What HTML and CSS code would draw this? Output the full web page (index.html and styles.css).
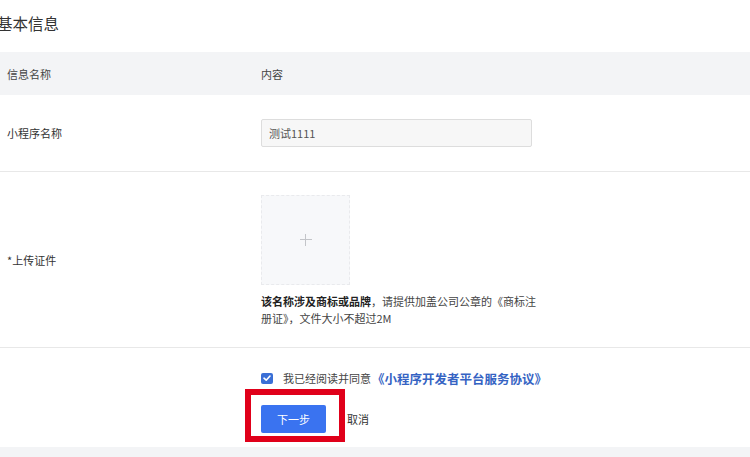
FILE: index.html
```html
<!DOCTYPE html>
<html lang="zh-CN">
<head>
<meta charset="utf-8">
<link rel="stylesheet" href="styles.css">
</head>
<body>
<div class="page">
  <div class="title-bar"><h2 class="title">基本信息</h2></div>
  <div class="table">
    <div class="row head">
      <div class="label">信息名称</div>
      <div class="content">内容</div>
    </div>
    <div class="row name-row">
      <div class="label">小程序名称</div>
      <div class="content"><div class="input">测试1111</div></div>
    </div>
    <div class="row upload-row">
      <div class="label">*上传证件</div>
      <div class="content">
        <div class="upload"><span class="plus"></span></div>
        <div class="help"><b>该名称涉及商标或品牌</b>，请提供加盖公司公章的《商标注<br>册证》，文件大小不超过2M</div>
      </div>
    </div>
    <div class="row action-row">
      <div class="label"></div>
      <div class="content">
        <div class="agree">
          <span class="checkbox"><svg viewBox="0 0 12 12" width="12" height="12"><path d="M3 6.2 L5.2 8.2 L9 4" fill="none" stroke="#fff" stroke-width="1.6" stroke-linecap="round" stroke-linejoin="round"/></svg></span>
          <span class="agree-text">我已经阅读并同意</span>
          <a class="agree-link">《小程序开发者平台服务协议》</a>
        </div>
        <div class="buttons">
          <div class="btn-wrap">
            <button class="btn-primary">下一步</button>
            <span class="highlight"></span>
          </div>
          <span class="cancel">取消</span>
        </div>
      </div>
    </div>
  </div>
  <div class="footer-band"></div>
</div>
</body>
</html>
```
FILE: styles.css
```css
* { box-sizing: border-box; }
html, body { margin: 0; padding: 0; background: #fff; }
body {
  font-family: "Noto Sans CJK SC", "Microsoft YaHei", "Liberation Sans", sans-serif;
  color: #333;
  font-size: 11px;
  width: 750px;
  height: 457px;
  overflow: hidden;
}
.page { display: flex; flex-direction: column; }
.title-bar { height: 52px; display: flex; align-items: center; }
.title {
  margin: 0 0 0 -3px;
  font-size: 15.5px;
  font-weight: normal;
  color: #333;
  line-height: 20px;
  padding-bottom: 6px;
}
.table { display: flex; flex-direction: column; }
.row {
  display: grid;
  grid-template-columns: 261px 1fr;
  align-items: center;
  border-bottom: 1px solid #e8e8e8;
}
.label { padding-left: 7px; line-height: 16px; color: #333; }
.head { height: 43px; background: #f3f4f6; border-bottom: none; }
.head .label, .head .content { color: #444; }
.name-row { height: 77px; }
.input {
  width: 271px;
  height: 28px;
  background: #f7f7f7;
  border: 1px solid #ddd;
  border-radius: 2px;
  padding-left: 7px;
  display: flex;
  align-items: center;
  color: #555;
  font-size: 11px;
}
.upload-row { height: 176px; }
.upload-row .content { padding-top: 2px; }
.upload {
  width: 89px;
  height: 90px;
  background: #f7f8fa;
  border: 1px dashed #e9eaed;
  position: relative;
  display: flex;
  align-items: center;
  justify-content: center;
}
.plus { width: 12px; height: 12px; position: relative; }
.plus::before, .plus::after {
  content: "";
  position: absolute;
  background: #c3c5c9;
}
.plus::before { left: 0; top: 5.5px; width: 12px; height: 1px; }
.plus::after { left: 5.5px; top: 0; width: 1px; height: 12px; }
.help {
  margin-top: 8px;
  line-height: 17px;
  font-size: 11px;
  color: #444;
  white-space: nowrap;
}
.help b { color: #222; font-weight: bold; }
.action-row { height: 99px; border-bottom: none; align-items: start; }
.action-row .content { padding-top: 22px; }
.agree { display: flex; align-items: center; height: 16px; }
.checkbox {
  width: 12px;
  height: 11px;
  background: #3a6fd6;
  border-radius: 2px;
  display: flex;
  align-items: center;
  justify-content: center;
}
.agree-text { margin-left: 10px; font-size: 11px; color: #444; }
.agree-link {
  margin-left: 1px;
  font-size: 12.5px;
  font-weight: bold;
  color: #3563c3;
}
.buttons { display: flex; align-items: center; margin-top: 19px; }
.btn-wrap { position: relative; width: 65px; height: 28px; }
.btn-primary {
  width: 65px;
  height: 28px;
  border: none;
  border-radius: 2px;
  background: #3a73f0;
  color: #fff;
  font-family: inherit;
  font-size: 11px;
  padding: 0;
}
.highlight {
  position: absolute;
  left: -16px;
  top: -16px;
  width: 100px;
  height: 53px;
  border: 6px solid #e0001a;
}
.cancel { margin-left: 21px; font-size: 11px; color: #333; }
.footer-band { height: 12px; background: #f3f4f6; }
```
